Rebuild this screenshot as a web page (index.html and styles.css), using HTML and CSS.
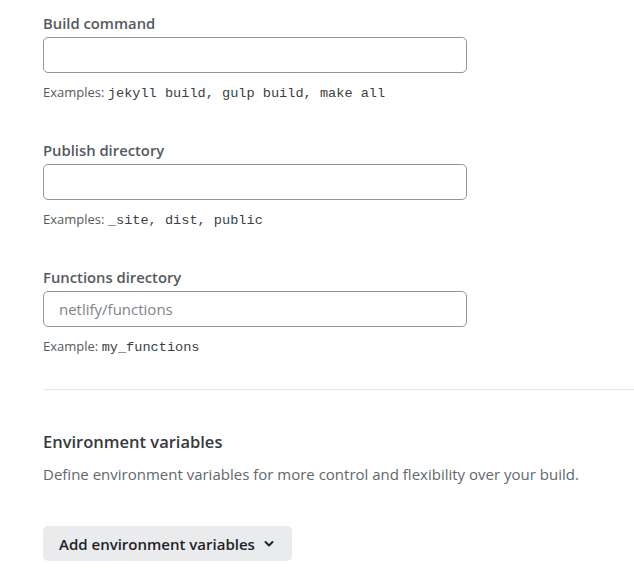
FILE: index.html
```html
<!DOCTYPE html>
<html>
<head>
<meta charset="utf-8">
<link rel="stylesheet" href="styles.css">
</head>
<body>
<div class="page">
  <div class="field">
    <label class="label">Build command</label>
    <input class="input" type="text">
    <p class="hint">Examples: <code>jekyll build, gulp build, make all</code></p>
  </div>
  <div class="field">
    <label class="label">Publish directory</label>
    <input class="input" type="text">
    <p class="hint">Examples: <code>_site, dist, public</code></p>
  </div>
  <div class="field">
    <label class="label">Functions directory</label>
    <input class="input" type="text" placeholder="netlify/functions">
    <p class="hint">Example: <code>my_functions</code></p>
  </div>
  <hr class="divider">
  <section class="env">
    <h2 class="env-title">Environment variables</h2>
    <p class="env-desc">Define environment variables for more control and flexibility over your build.</p>
    <button class="btn" type="button">Add environment variables
      <svg class="chev" width="10" height="8" viewBox="0 0 10 8"><path d="M1.5 2 L5 5.5 L8.5 2" fill="none" stroke="#1f2329" stroke-width="2" stroke-linecap="round" stroke-linejoin="round"/></svg>
    </button>
  </section>
</div>
</body>
</html>
```

FILE: styles.css
```css
* { box-sizing: border-box; }
html, body { margin: 0; padding: 0; background: #fff; }
body { font-family: "Open Sans", "Noto Sans", sans-serif; color: #545a61; }
.page { padding: 13px 0 0 43px; display: flex; flex-direction: column; }
.field { display: flex; flex-direction: column; margin-bottom: 39px; }
.field:nth-child(3) { margin-bottom: 0; }
.label { font-size: 14.8px; line-height: 20px; font-weight: 600; color: #545a61; margin-bottom: 4px; }
.input {
  width: 424px; height: 36px; margin: 0;
  border: 1px solid #8d96a1; border-radius: 5px;
  padding: 0 15px; font-family: inherit; font-size: 15px; color: #333;
  background: #fff; outline: none;
}
.input::placeholder { color: #7d848b; }
.hint { margin: 10px 0 0; height: 18px; font-size: 13px; line-height: 18px; color: #545a61; }
.hint code { font-family: "Liberation Mono", "DejaVu Sans Mono", monospace; font-size: 13.6px; line-height: 18px; color: #3a3f44; }
.divider { border: 0; border-top: 1px solid #e6e8ea; margin: 34px 0 0; height: 0; }
.env { display: flex; flex-direction: column; align-items: flex-start; }
.env-title { margin: 40px 0 0; font-size: 16.5px; line-height: 24px; font-weight: 600; color: #353a3f; }
.env-desc { margin: 9px 0 0; font-size: 15px; line-height: 22px; color: #62676c; }
.btn {
  margin-top: 41px; height: 35px; padding: 0 18px 0 16px;
  display: flex; align-items: center; gap: 9px;
  background: #e9ebed; border: 0; border-radius: 5px;
  font-family: inherit; font-size: 15px; font-weight: 600; color: #1f2329;
}
.chev { display: block; }
```
